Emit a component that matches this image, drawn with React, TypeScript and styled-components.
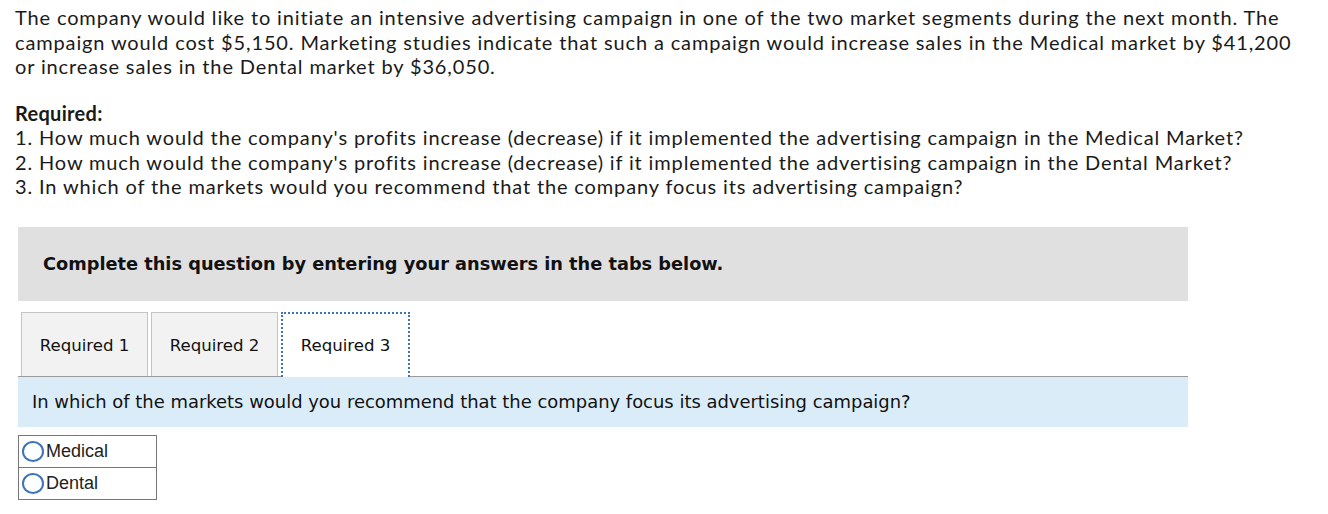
import React from "react";
import styled, { createGlobalStyle } from "styled-components";

const Global = createGlobalStyle`
  html, body { margin: 0; padding: 0; background: #fff; }
  body { width: 1328px; height: 514px; overflow: hidden; }
`;

const Page = styled.div`
  padding: 5px 0 0 15px;
  width: 1313px;
`;

const Intro = styled.div`
  font-family: Lato, "Open Sans", sans-serif;
  font-size: 20px;
  letter-spacing: 0.86px;
  line-height: 24.5px;
  color: #1a1a1a;
  white-space: nowrap;
`;

const Para = styled.p`
  margin: 0 0 22px 0;
`;

const Strong = styled.strong`
  font-weight: 700;
  letter-spacing: 0.3px;
`;

const Panel = styled.div`
  margin: 28px 0 0 3px;
  width: 1170px;
  display: flex;
  flex-direction: column;
`;

const Banner = styled.div`
  background: #e0e0e0;
  height: 74px;
  display: flex;
  align-items: center;
  padding-left: 25px;
  font-family: "DejaVu Sans", Verdana, sans-serif;
  font-weight: 700;
  font-size: 17.75px;
  color: #111;
`;

const TabList = styled.div`
  display: flex;
  gap: 3px;
  margin-top: 11px;
  padding-left: 3px;
  border-bottom: 1px solid #9a9a9a;
`;

const Tab = styled.div<{ $active?: boolean }>`
  box-sizing: border-box;
  width: ${(p) => (p.$active ? 129 : 127)}px;
  height: ${(p) => (p.$active ? 65 : 64)}px;
  padding-top: ${(p) => (p.$active ? 1 : 3)}px;
  display: flex;
  align-items: center;
  justify-content: center;
  font-family: "DejaVu Sans", Verdana, sans-serif;
  font-size: 16.6px;
  color: #111;
  background: ${(p) => (p.$active ? "#fff" : "#f2f2f2")};
  border: ${(p) => (p.$active ? "2px dotted #3d74b8" : "1px solid #c4c4c4")};
  border-bottom: none;
  margin-bottom: ${(p) => (p.$active ? "-1px" : "0")};
  position: relative;
  z-index: ${(p) => (p.$active ? 1 : 0)};
`;

const Question = styled.div`
  background: #dbecf9;
  height: 50px;
  display: flex;
  align-items: center;
  padding-left: 14px;
  font-family: "DejaVu Sans", Verdana, sans-serif;
  font-size: 17.95px;
  color: #111;
`;

const Options = styled.div`
  margin-top: 8px;
  width: 139px;
  box-sizing: border-box;
  border: 1px solid #777;
  display: flex;
  flex-direction: column;
`;

const Option = styled.label`
  height: 31px;
  display: flex;
  align-items: center;
  gap: 2px;
  padding-left: 3px;
  font-family: "Liberation Sans", Arial, sans-serif;
  font-size: 18px;
  color: #222;
  & + & { border-top: 1px solid #777; }
`;

const Radio = styled.span`
  box-sizing: border-box;
  width: 22px;
  height: 21px;
  border-radius: 50%;
  border: 2px solid #3d74b8;
  background: #fff;
`;

export default function App() {
  return (
    <Page>
      <Global />
      <Intro>
        <Para>
          The company would like to initiate an intensive advertising campaign in one of the two market segments during the next month. The
          <br />
          campaign would cost $5,150. Marketing studies indicate that such a campaign would increase sales in the Medical market by $41,200
          <br />
          or increase sales in the Dental market by $36,050.
        </Para>
        <Strong>Required:</Strong>
        <br />
        1. How much would the company's profits increase (decrease) if it implemented the advertising campaign in the Medical Market?
        <br />
        2. How much would the company's profits increase (decrease) if it implemented the advertising campaign in the Dental Market?
        <br />
        3. In which of the markets would you recommend that the company focus its advertising campaign?
      </Intro>
      <Panel>
        <Banner>Complete this question by entering your answers in the tabs below.</Banner>
        <TabList>
          <Tab>Required 1</Tab>
          <Tab>Required 2</Tab>
          <Tab $active>Required 3</Tab>
        </TabList>
        <Question>In which of the markets would you recommend that the company focus its advertising campaign?</Question>
        <Options>
          <Option>
            <Radio />
            Medical
          </Option>
          <Option>
            <Radio />
            Dental
          </Option>
        </Options>
      </Panel>
    </Page>
  );
}
